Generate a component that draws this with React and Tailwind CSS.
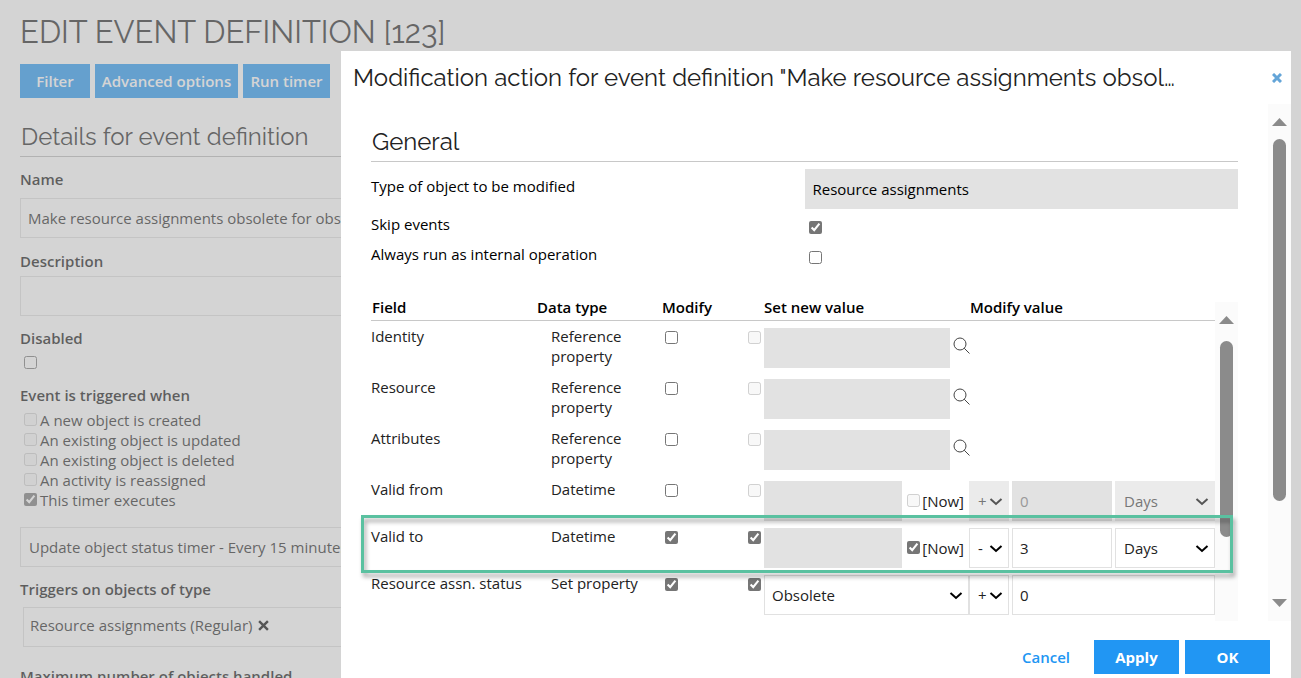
import React from 'react';

const triggers = [
  { label: 'A new object is created' },
  { label: 'An existing object is updated' },
  { label: 'An existing object is deleted' },
  { label: 'An activity is reassigned' },
  { label: 'This timer executes', checked: true },
];

const rows = [
  { field: 'Identity', type: 'Reference property', kind: 'reference' },
  { field: 'Resource', type: 'Reference property', kind: 'reference' },
  { field: 'Attributes', type: 'Reference property', kind: 'reference' },
  { field: 'Valid from', type: 'Datetime', kind: 'datetime', sign: '+', amount: '0' },
  { field: 'Valid to', type: 'Datetime', kind: 'datetime', sign: '-', amount: '3', modify: true, highlight: true },
  { field: 'Resource assn. status', type: 'Set property', kind: 'set', sign: '+', amount: '0', modify: true },
];

const headingFont = 'font-["Raleway","Lato",sans-serif]';

function Checkbox({ className = '', ...props }) {
  return (
    <input type="checkbox" className={`block size-[13px] shrink-0 accent-[#767676] ${className}`} {...props} />
  );
}

function Select({ label, value, disabled, className = '', pad = 'pl-2' }) {
  return (
    <div className={`relative h-10 ${className}`}>
      <select
        aria-label={label}
        disabled={disabled}
        defaultValue={value}
        className={`h-10 w-full appearance-none border border-[#e1e1e1] bg-white text-[#222] disabled:border-[#ebebeb] disabled:bg-[#ebebeb] disabled:text-[#777] ${pad}`}
      >
        <option>{value}</option>
      </select>
      <svg
        className={`pointer-events-none absolute right-1.5 top-4 h-2.5 w-3.5 ${disabled ? 'text-[#555]' : 'text-black'}`}
        viewBox="0 0 14 10"
        fill="none"
        stroke="currentColor"
        strokeWidth="2"
      >
        <path d="M1.5 2l5.5 5 5.5-5" />
      </svg>
    </div>
  );
}

function SearchIcon() {
  return (
    <svg className="size-[17px]" viewBox="0 0 17 17" fill="none" stroke="#444" strokeWidth="1">
      <circle cx="7" cy="7" r="6" />
      <path d="M11.2 11.2l5.3 5.3" />
    </svg>
  );
}

// Rail with arrows; the spacer classes decide how far the thumb reaches
function Scrollbar({ thumb, gap, down }) {
  return (
    <div className="flex w-[23px] shrink-0 flex-col items-center bg-[#fbfbfb] pb-3.5 pt-3.5">
      <svg className="h-2 w-[15px] shrink-0" viewBox="0 0 15 8">
        <path d="M7.5 0L15 8H0z" fill="#8b8b8b" />
      </svg>
      <div className={`w-[13px] rounded-full bg-[#8b8b8b] ${gap} ${thumb}`} />
      {down && (
        <svg className="mt-auto h-2 w-[15px] shrink-0" viewBox="0 0 15 8">
          <path d="M7.5 8L15 0H0z" fill="#8b8b8b" />
        </svg>
      )}
    </div>
  );
}

function Cross({ className }) {
  return (
    <svg className={className} viewBox="0 0 10 10" fill="none" stroke="currentColor">
      <path d="M1 1l8 8M9 1L1 9" />
    </svg>
  );
}

function EventForm() {
  const label = 'block font-semibold text-[#111]';
  const box = 'block h-10 w-full border border-[#dedede] bg-white px-[7px] text-[#222]';
  return (
    <main className="px-5 pt-3">
      <h1 className={`${headingFont} text-[31px] font-normal leading-10 text-[#222]`}>EDIT EVENT DEFINITION [123]</h1>
      <div className="mt-3 flex gap-[5px]">
        <button className="h-[34px] w-[70px] bg-[#2196f3] font-semibold text-white">Filter</button>
        <button className="h-[34px] w-[143px] bg-[#2196f3] font-semibold text-white">Advanced options</button>
        <button className="h-[34px] w-[87px] bg-[#2196f3] font-semibold text-white">Run timer</button>
      </div>
      <h2 className={`${headingFont} mt-5 border-b border-[#bbb] pl-px text-2xl/[38px] font-normal text-[#222]`}>
        Details for event definition
      </h2>

      <label htmlFor="name" className={`${label} mt-3`}>Name</label>
      <input id="name" className={`${box} mt-[9px]`} defaultValue="Make resource assignments obsolete for obsolete resources" />

      <label htmlFor="description" className={`${label} mt-[13px]`}>Description</label>
      <input id="description" className={`${box} mt-[5px]`} />

      <label htmlFor="disabled" className={`${label} mt-3`}>Disabled</label>
      <Checkbox id="disabled" className="ml-1 mt-2" />

      <fieldset className="mt-4">
        <legend className={label}>Event is triggered when</legend>
        <div className="mt-[5px]">
          {triggers.map((t) => (
            <label key={t.label} className="flex h-5 gap-[3px] pl-1">
              <Checkbox className="mt-[3px]" defaultChecked={t.checked} disabled={!t.checked} />
              <span className="text-[#222]">{t.label}</span>
            </label>
          ))}
        </div>
      </fieldset>

      <select aria-label="Timer" className="mt-[17px] block h-10 w-full appearance-none border border-[#dedede] bg-white px-2 text-[#222]">
        <option>Update object status timer - Every 15 minutes</option>
      </select>

      <p className={`${label} mt-3`}>Triggers on objects of type</p>
      <div className="ml-[3px] mt-2 flex h-10 items-center border border-[#dedede] px-1.5 pb-1 text-[#222]">
        Resource assignments (Regular)
        <button aria-label="Remove" className="ml-1.5">
          <Cross className="size-[11px] stroke-[2.2] text-black" />
        </button>
      </div>

      <p className={`${label} mt-[19px]`}>Maximum number of objects handled</p>
    </main>
  );
}

function NewValue({ row }) {
  if (row.kind === 'set') {
    return <Select label={`${row.field} new value`} value="Obsolete" className="w-full" pad="pl-[7px]" />;
  }
  if (row.kind === 'reference') {
    return (
      <div className="flex">
        <input aria-label={`${row.field} new value`} disabled className="h-10 w-[186px] bg-[#e2e2e2] px-[7px]" />
        <button aria-label={`Search ${row.field}`} className="mt-[9px] h-[17px] shrink-0 pl-[3px]">
          <SearchIcon />
        </button>
      </div>
    );
  }
  return (
    <div className="flex">
      <input aria-label={`${row.field} new value`} disabled className="h-10 min-w-0 flex-1 bg-[#e2e2e2] px-[7px]" />
      <label className="flex gap-0.5 px-[5px] pt-2.5">
        <Checkbox className="mt-[3px]" defaultChecked={row.modify} disabled={!row.modify} />
        <span>[Now]</span>
      </label>
    </div>
  );
}

function ModifyValue({ row }) {
  if (row.kind === 'reference') return null;
  return (
    <div className="flex gap-[3px]">
      <Select label="Sign" value={row.sign} disabled={!row.modify} className="w-10 shrink-0" />
      <input
        aria-label="Amount"
        disabled={!row.modify}
        defaultValue={row.amount}
        className="h-10 min-w-0 flex-1 border border-[#e1e1e1] bg-white px-[7px] text-[#222] disabled:bg-[#e2e2e2] disabled:text-[#999]"
      />
      {row.kind === 'datetime' && (
        <Select label="Unit" value="Days" disabled={!row.modify} className="w-[100px] shrink-0" />
      )}
    </div>
  );
}

function FieldTable() {
  return (
    <table className="w-full table-fixed border-collapse">
      <colgroup>
        <col />
        <col className="w-[125px]" />
        <col className="w-[83px]" />
        <col className="w-[19px]" />
        <col className="w-[205px]" />
        <col className="w-[246px]" />
      </colgroup>
      <thead>
        <tr className="h-[19px] border-b border-[#c8c8c8] text-left leading-[19px]">
          <th className="h-[19px] pl-px font-semibold"><div className="-mt-1.5">Field</div></th>
          <th className="font-semibold"><div className="-mt-1.5">Data type</div></th>
          <th colSpan={2} className="font-semibold"><div className="-mt-1.5">Modify</div></th>
          <th className="font-semibold"><div className="-mt-1.5">Set new value</div></th>
          <th className="pl-px font-semibold"><div className="-mt-1.5">Modify value</div></th>
        </tr>
      </thead>
      <tbody>
        {rows.map((row) => (
          <tr key={row.field} className="relative align-top text-[#222]">
            <td className="whitespace-nowrap pb-1.5 pt-[5px]">
              {row.field}
              {row.highlight && (
                <div className="pointer-events-none absolute -bottom-[5px] -left-2.5 -right-[18px] -top-1.5 z-10 border-3 border-[#5ac1a0] drop-shadow-[2px_4px_2px_rgba(0,0,0,0.35)]" />
              )}
            </td>
            <td className="pb-1.5 pl-3.5 pt-[5px]">{row.type}</td>
            <td className="pl-[3px] pt-2.5">
              <Checkbox aria-label={`Modify ${row.field}`} defaultChecked={row.modify} />
            </td>
            <td className="pl-[3px] pt-2.5">
              <Checkbox aria-label={`Set ${row.field}`} defaultChecked={row.modify} disabled={!row.modify} />
            </td>
            <td className="pt-[7px]"><NewValue row={row} /></td>
            <td className="pt-[7px]"><ModifyValue row={row} /></td>
          </tr>
        ))}
      </tbody>
    </table>
  );
}

function ModificationDialog() {
  return (
    <section role="dialog" className="absolute bottom-0 left-[341px] right-2.5 top-[51px] flex flex-col bg-white text-black">
      <header className="flex h-[53px] shrink-0 items-center justify-between pl-3 pr-[9px]">
        <h2 className={`${headingFont} whitespace-nowrap text-2xl font-normal text-[#222]`}>
          Modification action for event definition "Make resource assignments obsol…
        </h2>
        <button aria-label="Close">
          <Cross className="size-2.5 stroke-3 text-[#64a5d8]" />
        </button>
      </header>

      <div className="flex min-h-0 flex-1">
        <div className="min-w-0 flex-1 px-[30px] pt-[19px]">
          <h3 className={`${headingFont} border-b border-[#c8c8c8] pl-px text-2xl/[38px] font-normal text-[#222]`}>General</h3>
          <div className="mt-[7px] grid grid-cols-2">
            <label htmlFor="objectType" className="pt-[7px]">Type of object to be modified</label>
            <input id="objectType" readOnly defaultValue="Resource assignments" className="h-10 w-full bg-[#e2e2e2] px-2" />
            <label htmlFor="skip" className="h-[30px] pt-[5px]">Skip events</label>
            <Checkbox id="skip" defaultChecked className="ml-1 mt-3" />
            <label htmlFor="internal" className="h-[30px] pt-[5px]">Always run as internal operation</label>
            <Checkbox id="internal" className="ml-1 mt-3" />
          </div>
          <div className="mt-[33px] flex h-[319px]">
            <div className="-mt-px min-w-0 flex-1">
              <FieldTable />
            </div>
            <Scrollbar gap="mt-[17px]" thumb="h-[196px]" />
          </div>
        </div>
        <Scrollbar gap="mt-[13px]" thumb="h-[362px]" down />
      </div>

      <footer className="flex shrink-0 items-center justify-end gap-1.5 pb-1 pr-[21px] pt-[19px]">
        <button className="mr-[18px] font-semibold text-[#2196f3]">Cancel</button>
        <button className="h-[34px] w-[85px] bg-[#2196f3] font-bold text-white">Apply</button>
        <button className="h-[34px] w-[85px] bg-[#2196f3] font-bold text-white">OK</button>
      </footer>
    </section>
  );
}

export default function App() {
  return (
    <div className='relative h-screen overflow-hidden bg-white font-["Open_Sans","Noto_Sans",sans-serif] text-[15px] leading-5'>
      <EventForm />
      <div className="absolute inset-0 bg-[#aaa]/50" />
      <ModificationDialog />
    </div>
  );
}
